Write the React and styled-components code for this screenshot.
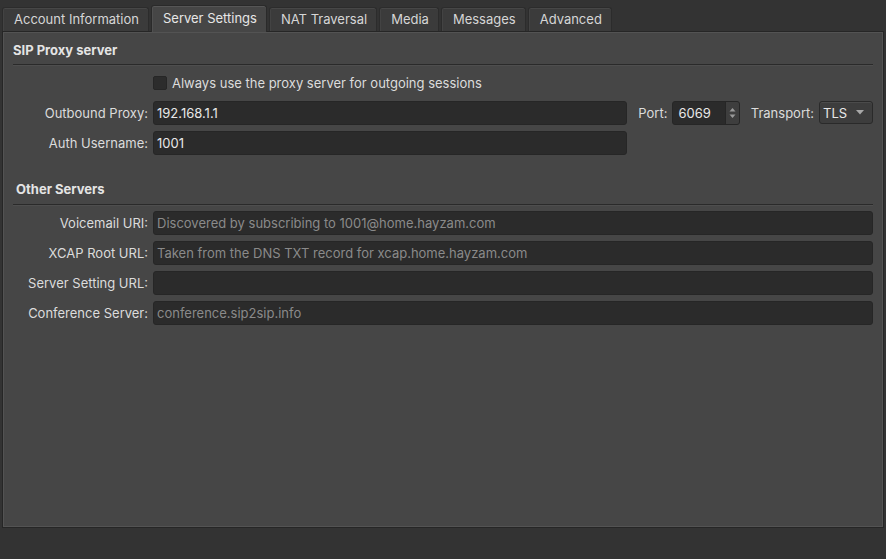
import React from "react";
import styled, { createGlobalStyle } from "styled-components";

const GlobalStyle = createGlobalStyle`
  html, body {
    margin: 0;
    padding: 0;
    background: #333333;
  }
  body {
    font-family: Inter, "Noto Sans", sans-serif;
    font-size: 13px;
    color: #dedede;
  }
`;

const Window = styled.div`
  width: 886px;
  height: 559px;
  padding: 0 2px;
  box-sizing: border-box;
  display: flex;
  flex-direction: column;
`;

const TabBar = styled.div`
  display: flex;
  align-items: flex-end;
  gap: 2px;
  height: 31px;
  position: relative;
  z-index: 1;
`;

const Tab = styled.div`
  height: ${(p) => (p.$active ? "27px" : "24px")};
  padding: 0 9px 0 11px;
  display: flex;
  align-items: center;
  box-sizing: border-box;
  border: 1px solid ${(p) => (p.$active ? "#2a2a2a" : "#2c2c2c")};
  border-bottom: none;
  border-radius: 3px 3px 0 0;
  background: ${(p) => (p.$active ? "#464646" : "#3b3b3b")};
  box-shadow: inset 0 1px 0 ${(p) => (p.$active ? "#565656" : "#474747")},
    inset 1px 0 0 ${(p) => (p.$active ? "#505050" : "#434343")};
  color: ${(p) => (p.$active ? "#e6e6e6" : "#d6d6d6")};
  margin-bottom: ${(p) => (p.$active ? "-1px" : "0")};
  padding-bottom: ${(p) => (p.$active ? "3px" : "1px")};
  white-space: nowrap;
`;

const Panel = styled.div`
  width: 882px;
  height: 497px;
  box-sizing: border-box;
  background: #464646;
  border: 1px solid #262626;
  box-shadow: inset 1px 1px 0 #535353, inset -1px -1px 0 #535353;
  padding: 0 10px;
`;

const SectionHeader = styled.div`
  font-weight: 700;
  line-height: 16px;
  color: #e4e4e4;
  padding: ${(p) => (p.$first ? "10px 0 6px 0" : "0 0 7px 3px")};
  margin-top: ${(p) => (p.$first ? "0" : "26px")};
  border-bottom: 1px solid #2a2a2a;
  box-shadow: 0 1px 0 #4e4e4e;
`;

const ProxyGrid = styled.div`
  display: grid;
  grid-template-columns: 135px 474px auto 68px auto 54px;
  grid-auto-rows: 24px;
  column-gap: 5px;
  row-gap: 6px;
  margin-top: 6px;
  align-items: center;
`;

const ServerGrid = styled.div`
  display: grid;
  grid-template-columns: 135px 1fr;
  grid-auto-rows: 24px;
  column-gap: 5px;
  row-gap: 6px;
  margin-top: 6px;
  align-items: center;
`;

const Label = styled.div`
  text-align: right;
  white-space: nowrap;
  color: #dcdcdc;
  margin-left: ${(p) => p.$indent || "0"};
`;

const Field = styled.div`
  height: 24px;
  box-sizing: border-box;
  background: #2b2b2b;
  border: 1px solid #262626;
  border-radius: 3px;
  display: flex;
  align-items: center;
  padding-left: 3px;
  color: ${(p) => (p.$placeholder ? "#8a8a8a" : "#e8e8e8")};
  white-space: nowrap;
  overflow: hidden;
`;

const CheckRow = styled.label`
  grid-column: 2 / 7;
  display: flex;
  align-items: center;
  gap: 5px;
  color: #dcdcdc;
`;

const CheckBox = styled.span`
  width: 14px;
  height: 14px;
  box-sizing: border-box;
  background: #2c2c2c;
  border: 1px solid #262626;
  border-radius: 2px;
`;

const Spin = styled.div`
  height: 24px;
  box-sizing: border-box;
  background: #2b2b2b;
  border: 1px solid #262626;
  border-radius: 3px;
  display: flex;
  align-items: stretch;
  color: #e8e8e8;
  span {
    flex: 1;
    display: flex;
    align-items: center;
    padding-left: 5px;
  }
`;

const SpinButtons = styled.div`
  width: 13px;
  background: #3e3e3e;
  border-left: 1px solid #262626;
  border-radius: 0 2px 2px 0;
  display: flex;
  align-items: center;
  justify-content: center;
`;

const Combo = styled.div`
  height: 23px;
  box-sizing: border-box;
  background: #3d3d3d;
  border: 1px solid #2a2a2a;
  border-radius: 3px;
  box-shadow: inset 0 1px 0 #4b4b4b;
  display: flex;
  align-items: center;
  justify-content: space-between;
  padding: 0 8px 0 3px;
  color: #e8e8e8;
  align-self: start;
`;

const App = () => {
  const tabs = [
    "Account Information",
    "Server Settings",
    "NAT Traversal",
    "Media",
    "Messages",
    "Advanced",
  ];
  return (
    <>
      <GlobalStyle />
      <Window>
        <TabBar>
          {tabs.map((t) => (
            <Tab key={t} $active={t === "Server Settings"}>
              {t}
            </Tab>
          ))}
        </TabBar>
        <Panel>
          <SectionHeader $first>SIP Proxy server</SectionHeader>
          <ProxyGrid>
            <div />
            <CheckRow>
              <CheckBox />
              Always use the proxy server for outgoing sessions
            </CheckRow>

            <Label>Outbound Proxy:</Label>
            <Field>192.168.1.1</Field>
            <Label $indent="1px">Port:</Label>
            <Spin>
              <span>6069</span>
              <SpinButtons>
                <svg width="7" height="14" viewBox="0 0 7 14">
                  <path d="M0.5 5.5 L3.5 2 L6.5 5.5 Z" fill="#9a9a9a" />
                  <path d="M0.5 8.5 L3.5 12 L6.5 8.5 Z" fill="#9a9a9a" />
                </svg>
              </SpinButtons>
            </Spin>
            <Label>Transport:</Label>
            <Combo>
              TLS
              <svg width="8" height="5" viewBox="0 0 8 5">
                <path d="M0 0 L8 0 L4 4.5 Z" fill="#a8a8a8" />
              </svg>
            </Combo>

            <Label>Auth Username:</Label>
            <Field>1001</Field>
          </ProxyGrid>

          <SectionHeader>Other Servers</SectionHeader>
          <ServerGrid>
            <Label>Voicemail URI:</Label>
            <Field $placeholder>
              Discovered by subscribing to 1001@home.hayzam.com
            </Field>
            <Label>XCAP Root URL:</Label>
            <Field $placeholder>
              Taken from the DNS TXT record for xcap.home.hayzam.com
            </Field>
            <Label>Server Setting URL:</Label>
            <Field />
            <Label>Conference Server:</Label>
            <Field $placeholder>conference.sip2sip.info</Field>
          </ServerGrid>
        </Panel>
      </Window>
    </>
  );
};

export default App;
